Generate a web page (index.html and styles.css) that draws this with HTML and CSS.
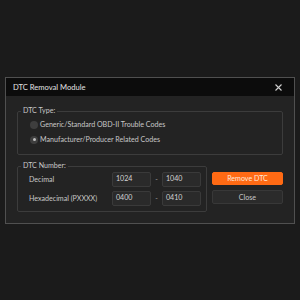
FILE: index.html
```html
<!DOCTYPE html>
<html lang="en">
<head>
    <meta charset="UTF-8">
    <title>DTC Removal Module</title>
    <link rel="stylesheet" href="styles.css">
</head>
<body>
    <!-- dialog window -->
    <div class="window">
        <div class="titlebar">
            <span class="title">DTC Removal Module</span>
            <svg class="close-x" width="7" height="7" viewBox="0 0 7 7">
                <path d="M0.5 0.5 L6.5 6.5 M6.5 0.5 L0.5 6.5" stroke="#d0d0d0" stroke-width="1.1" fill="none"/>
            </svg>
        </div>

        <div class="body">
            <!-- DTC type -->
            <fieldset class="group group-type">
                <legend>DTC Type:</legend>
                <label class="radio-row">
                    <span class="radio"></span>
                    <span>Generic/Standard OBD-II Trouble Codes</span>
                </label>
                <label class="radio-row">
                    <span class="radio checked"></span>
                    <span>Manufacturer/Producer Related Codes</span>
                </label>
            </fieldset>

            <div class="bottom">
                <!-- DTC number -->
                <fieldset class="group group-number">
                    <legend>DTC Number:</legend>
                    <div class="num-row">
                        <span class="num-label">Decimal</span>
                        <span class="input">1024</span>
                        <span class="dash">-</span>
                        <span class="input">1040</span>
                    </div>
                    <div class="num-row">
                        <span class="num-label">Hexadecimal (PXXXX)</span>
                        <span class="input">0400</span>
                        <span class="dash">-</span>
                        <span class="input">0410</span>
                    </div>
                </fieldset>

                <div class="actions">
                    <button class="btn btn-primary">Remove DTC</button>
                    <button class="btn">Close</button>
                </div>
            </div>
        </div>
    </div>
</body>
</html>
```

FILE: styles.css
```css
* {
    margin: 0;
    padding: 0;
    box-sizing: border-box;
}

body {
    width: 300px;
    height: 300px;
    background: #1b1b1b;
    font-family: 'Lato', 'Open Sans', sans-serif;
    font-size: 7.1px;
    color: #c8c8c8;
    padding: 77px 5px 0 5px;
}

/* dialog window */
.window {
    width: 290px;
    height: 147px;
    border: 1px solid #505050;
    background: #232323;
    display: flex;
    flex-direction: column;
}

.titlebar {
    height: 18px;
    background: #0c0c0c;
    display: flex;
    align-items: center;
    justify-content: space-between;
    padding: 0 12px 0 7px;
}
.title {
    font-size: 7.6px;
    color: #e2e2e2;
}
.close-x {
    display: block;
}

.body {
    flex: 1;
    padding: 10px 11px 0 11px;
    display: flex;
    flex-direction: column;
}

/* grouped boxes */
.group {
    border: 1px solid #3c3c3c;
    border-radius: 2px;
}
.group legend {
    padding: 0 2px;
    font-size: 7.1px;
    line-height: 10px;
    color: #c8c8c8;
}

.group-type {
    height: 49px;
    padding: 4px 0 0 12px;
    display: flex;
    flex-direction: column;
    gap: 6px;
}
.group-type legend {
    margin-left: -9px;
}

.radio-row {
    display: flex;
    align-items: center;
    gap: 2px;
    height: 9px;
    line-height: 9px;
}
.radio {
    width: 8px;
    height: 8px;
    border-radius: 50%;
    background: #3e3e3e;
    display: flex;
    align-items: center;
    justify-content: center;
}
.radio.checked::after {
    content: "";
    width: 3px;
    height: 3px;
    border-radius: 50%;
    background: #bdbdbd;
}

.bottom {
    margin-top: 6px;
    display: flex;
    gap: 5px;
}

.group-number {
    width: 190px;
    height: 51px;
    padding: 1px 4px 0 11px;
    display: flex;
    flex-direction: column;
    gap: 4px;
}
.group-number legend {
    margin-left: -8px;
}

.num-row {
    display: flex;
    align-items: center;
    height: 15px;
}
.num-label {
    width: 83px;
}
.input {
    width: 39px;
    height: 15px;
    border: 1px solid #3a3a3a;
    border-radius: 2px;
    background: #2a2a2a;
    color: #d4d4d4;
    padding: 0 3px;
    line-height: 11px;
}
.dash {
    width: 11px;
    text-align: center;
    color: #9a9a9a;
}

/* buttons */
.actions {
    padding-top: 11px;
    display: flex;
    flex-direction: column;
    gap: 5px;
}
.btn {
    width: 71px;
    height: 14px;
    border: 1px solid #383838;
    border-radius: 2px;
    background: #2b2b2b;
    color: #c8c8c8;
    font-family: inherit;
    font-size: 7.1px;
}
.btn-primary {
    height: 13px;
    background: #ff6a14;
    border-color: #ff6a14;
    color: #ffe9dc;
}
```
